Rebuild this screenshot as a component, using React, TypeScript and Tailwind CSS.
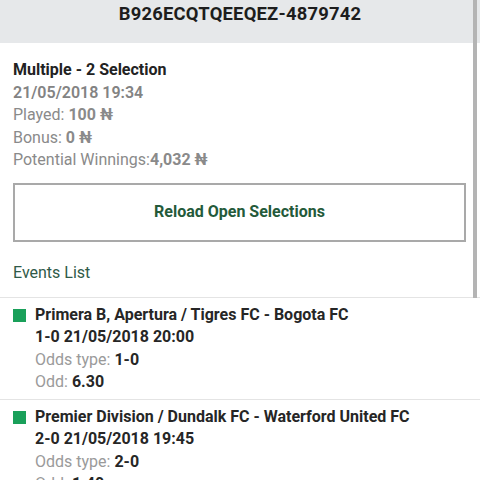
const events = [
  {
    title: "Primera B, Apertura / Tigres FC - Bogota FC",
    line: "1-0 21/05/2018 20:00",
    oddsType: "1-0",
    odd: "6.30",
  },
  {
    title: "Premier Division / Dundalk FC - Waterford United FC",
    line: "2-0 21/05/2018 19:45",
    oddsType: "2-0",
    odd: "1.40",
  },
];

export default function App() {
  return (
    <div
      className="relative h-[480px] w-[480px] overflow-hidden bg-white text-[16px]"
      style={{ fontFamily: "Roboto, 'Liberation Sans', sans-serif" }}
    >
      {/* scrollbar thumb */}
      <div className="absolute right-[3px] top-0 h-[298px] w-[4px] bg-[#b4b4b4]" />

      <div className="flex h-[43px] items-start justify-center bg-[#e6e8ea] pt-[1px]">
        <span className="text-[18.4px] font-bold leading-[26px] tracking-[0.2px] text-[#1d1d1d]">
          B926ECQTQEEQEZ-4879742
        </span>
      </div>

      <div className="px-[13px] pt-[16px]">
        <div className="leading-[22.5px]">
          <div className="font-bold text-[#222]">Multiple - 2 Selection</div>
          <div className="font-semibold text-[#838383]">21/05/2018 19:34</div>
          <div className="text-[#8a8a8a]">
            Played: <span className="font-bold">100 ₦</span>
          </div>
          <div className="text-[#8a8a8a]">
            Bonus: <span className="font-bold">0 ₦</span>
          </div>
          <div className="text-[#8a8a8a]">
            Potential Winnings:<span className="font-bold">4,032 ₦</span>
          </div>
        </div>

        <div className="mt-[11px] mr-[1px] flex h-[59px] items-center justify-center border-2 border-[#a9a9a9]">
          <span className="font-bold text-[#245a3a]">Reload Open Selections</span>
        </div>

        <div className="mt-[20px] leading-[22px] text-[#2f5a48]">Events List</div>
      </div>

      <div className="mt-[13px] border-t border-[#e4e4e4]">
        {events.map((e) => (
          <div
            key={e.title}
            className="flex gap-[9px] border-b border-[#e4e4e4] px-[13px] pt-[6px] pb-[5px]"
          >
            <div className="mt-[5px] h-[13px] w-[13px] shrink-0 bg-[#1aa05a]" />
            <div className="leading-[22.5px]">
              <div className="font-bold text-[#262626]">{e.title}</div>
              <div className="font-bold text-[#262626]">{e.line}</div>
              <div className="text-[#9a9a9a]">
                Odds type: <span className="font-bold text-[#262626]">{e.oddsType}</span>
              </div>
              <div className="text-[#9a9a9a]">
                Odd: <span className="font-bold text-[#262626]">{e.odd}</span>
              </div>
            </div>
          </div>
        ))}
      </div>
    </div>
  );
}
